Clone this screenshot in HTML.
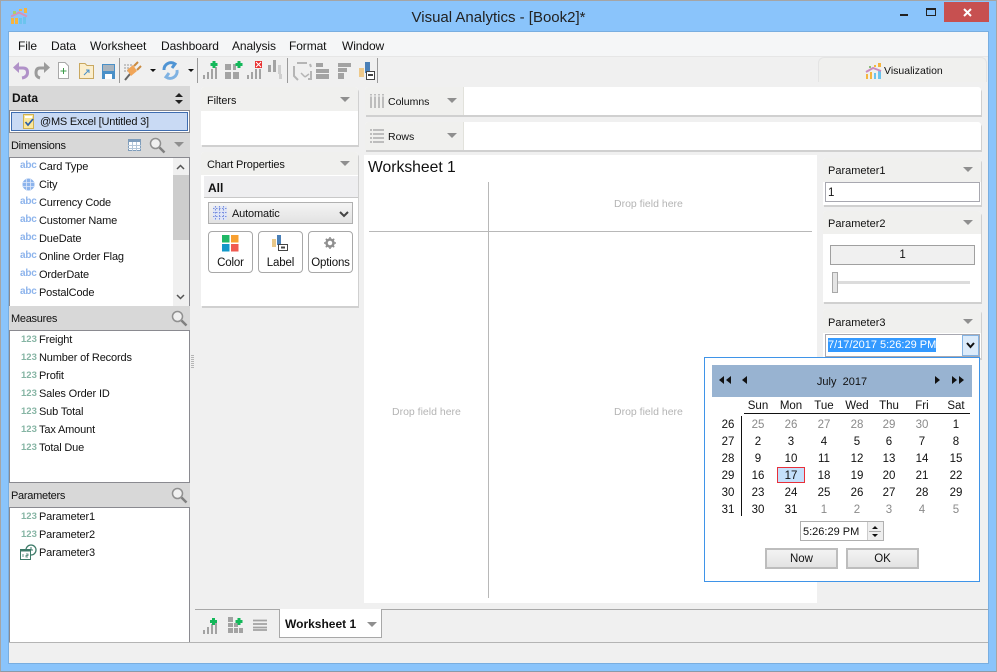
<!DOCTYPE html>
<html><head><meta charset="utf-8"><style>
html,body{margin:0;padding:0}
body{width:997px;height:672px;overflow:hidden;position:relative;background:#8ac4fb;font:11px "Liberation Sans",sans-serif;letter-spacing:-.15px;color:#111}
div,span,svg{position:absolute;box-sizing:border-box}
.t{white-space:nowrap;line-height:14px;margin-top:1px}
.hd{background:#d8d8d8}
.pn{background:#fff;box-shadow:1px 2px 0 #d0d0d0;border-radius:3px 3px 0 0}
.ph{left:0;top:0;right:0;background:#f0f0ee;border-radius:3px 3px 0 0}
.arr{width:0;height:0;border-left:5px solid transparent;border-right:5px solid transparent;border-top:5px solid #8f8f8f}
.g{color:#8a8a8a}
.c{text-align:center;width:30px;margin-left:-15px;line-height:14px;font-size:11.5px;letter-spacing:0}
.ic{color:#8db4ec;font-size:10px;font-weight:bold;letter-spacing:-.2px;margin-top:2px}
.n{color:#86b5a4;font-size:9.5px;font-weight:bold;letter-spacing:0}
.m{font-size:12px;letter-spacing:-.1px;top:38px}
.h2{letter-spacing:-.28px}
.z{letter-spacing:0}
.btn{background:linear-gradient(#f3f3f3,#e3e3e3);border:2px solid #bdbdbd;text-align:center;line-height:18px;font-size:11.5px;letter-spacing:0}
.cb{background:#fff;border:1px solid #a8a8a8;border-radius:4px;text-align:center}
</style></head><body>
<div style="left:0;top:0;width:997px;height:672px;border:1px solid #a5a5a5;border-bottom-color:#8a9aa8"></div>
<svg style="left:11px;top:8px" width="17" height="17" viewBox="0 0 17 17"><rect x="0" y="10" width="3" height="6" fill="#f5b53f"/><rect x="4" y="10" width="3" height="6" fill="#f5b53f"/><rect x="8" y="10" width="3" height="6" fill="#6cc4ee"/><rect x="12" y="9" width="3" height="7" fill="#6cc4ee"/><path d="M0 8.500L8 4.500L16 8.500" stroke="#d893b8" stroke-width="2" fill="none"/><rect x="2" y="3" width="3" height="3" fill="#a8cf70"/><rect x="8" y="1" width="3" height="2" fill="#f5b53f"/><rect x="13" y="0" width="3" height="5" fill="#f5b53f"/></svg>
<div class="t" style="left:0;width:997px;top:8px;text-align:center;font-size:15px;line-height:17px;color:#222;letter-spacing:0">Visual Analytics - [Book2]*</div>
<div style="left:900px;top:14px;width:8px;height:2px;background:#222"></div>
<div style="left:926px;top:8px;width:10px;height:8px;border:1px solid #222;border-top-width:2px"></div>
<div style="left:944px;top:2px;width:45px;height:20px;background:#c75050"></div>
<svg style="left:963px;top:8px" width="9" height="9"><path d="M1 1L8 8M8 1L1 8" stroke="#fff" stroke-width="2"/></svg>

<div style="left:8px;top:31px;width:981px;height:633px;background:#f0f0f0;border:1px solid #79aee0"></div>
<div style="left:9px;top:32px;width:979px;height:24px;background:#f5f6f7"></div>
<div style="left:9px;top:56px;width:979px;height:29px;background:#f0f0f0;border-top:1px solid #e6e6e6"></div>
<div class="t m" style="left:18px">File</div>
<div class="t m" style="left:51px">Data</div>
<div class="t m" style="left:90px">Worksheet</div>
<div class="t m" style="left:161px">Dashboard</div>
<div class="t m" style="left:232px">Analysis</div>
<div class="t m" style="left:289px">Format</div>
<div class="t m" style="left:342px">Window</div>

<!-- toolbar -->
<svg style="left:9px;top:56px" width="280" height="28" viewBox="0 0 280 28">
<path d="M7 12H14Q18.500 12 18.500 16.500Q18.500 21 13 22" stroke="#b091c8" stroke-width="3" fill="none"/><path d="M10 6V17L4 11.500Z" fill="#b091c8"/>
<path d="M38 12H31Q27 12 27 17Q27 21 31 22" stroke="#9b9b9b" stroke-width="3" fill="none"/><path d="M35 6V17L41 11.500Z" fill="#9b9b9b"/>
<path d="M49.500 6.500H56L59.500 10V22.500H49.500Z" fill="#fff" stroke="#a8a8a8"/><path d="M54.500 12V18M51.500 15H57.500" stroke="#3b9b48"/>
<path d="M70.500 10.500V7.500H76L78 9.500H84.500V22.500H70.500Z" fill="#fbeecd" stroke="#c9a860"/><path d="M75 19L80 14M77 14H80V17" stroke="#4a90c8" fill="none"/>
<rect x="93" y="8" width="13" height="15" fill="#4a90c8"/><rect x="94" y="9" width="11" height="6" fill="#a9b4be"/><rect x="96" y="18" width="7" height="5" fill="#fff"/>
<rect x="110" y="2" width="1" height="25" fill="#9a9a9a"/>
<path d="M115 9h9M115 12h7M115 15h5" stroke="#999" stroke-dasharray="2 1"/><path d="M116 24L121 18" stroke="#666" stroke-width="2"/><path d="M118 14L124 9L128 15L122 20Z" fill="#f0a558"/><path d="M125 10L129 6M128 14L132 10" stroke="#c98a40" stroke-width="2"/>
<path d="M141 13h6l-3 3z" fill="#111"/>
<path d="M155 14A7 7 0 0 1 166 8L163 12" stroke="#4f94d4" stroke-width="3" fill="none"/><path d="M168 14A7 7 0 0 1 157 21L160 17" stroke="#7fb2e2" stroke-width="3" fill="none"/>
<path d="M179 13h6l-3 3z" fill="#111"/>
<rect x="188" y="2" width="1" height="25" fill="#9a9a9a"/>
<g fill="#a3a3a3"><rect x="194" y="19" width="2" height="4"/><rect x="198" y="16" width="2" height="7"/><rect x="202" y="13" width="2" height="10"/><rect x="206" y="11" width="2" height="12"/></g>
<path d="M205 5v7M201.500 8.500h7" stroke="#13b85a" stroke-width="3"/>
<g fill="#a3a3a3"><rect x="216" y="8" width="6" height="6"/><rect x="216" y="16" width="6" height="7"/><rect x="224" y="16" width="6" height="7"/><rect x="224" y="8" width="3" height="6"/></g>
<path d="M230 5v7M226.500 8.500h7" stroke="#13b85a" stroke-width="3"/>
<g fill="#a3a3a3"><rect x="238" y="19" width="2" height="4"/><rect x="242" y="16" width="2" height="7"/><rect x="246" y="13" width="2" height="10"/><rect x="250" y="13" width="2" height="10"/></g>
<rect x="246" y="5" width="7" height="7" fill="#e83030"/><path d="M247 6l5 5M252 6l-5 5" stroke="#fff" stroke-width="1"/>
<g fill="#a3a3a3"><rect x="259" y="9" width="3" height="7"/><rect x="264" y="4" width="3" height="12"/></g><g fill="#cfcfcf"><rect x="269" y="9" width="3" height="9"/><rect x="270" y="18" width="3" height="5"/></g>
</svg>
<div style="left:287px;top:58px;width:1px;height:25px;background:#9a9a9a"></div>
<svg style="left:290px;top:56px" width="90" height="28" viewBox="0 0 90 28">
<path d="M4 10V20L8 24M7 7H17M20 8L21 11M21 15V23H18" stroke="#b5b5b5" stroke-width="2" fill="none"/><path d="M15 21L11 17M15 21L19 18" stroke="#b5b5b5" stroke-width="1.500" fill="none"/>
<g fill="#a3a3a3"><rect x="26" y="7" width="7" height="4"/><rect x="26" y="13" width="13" height="4"/><rect x="26" y="18" width="13" height="5"/></g>
<g fill="#a3a3a3"><rect x="48" y="7" width="13" height="4"/><rect x="48" y="12" width="9" height="4"/><rect x="48" y="17" width="6" height="6"/></g>
<rect x="69" y="12" width="5" height="9" fill="#eec98a"/><rect x="75" y="6" width="5" height="11" fill="#4a80b8"/><rect x="76.500" y="15.500" width="8" height="8" fill="#fff" stroke="#444"/><rect x="78" y="18" width="5" height="2" fill="#444"/>
</svg>
<div style="left:377px;top:58px;width:1px;height:25px;background:#9a9a9a"></div>

<div style="left:818px;top:57px;width:169px;height:25px;background:#f0f0ee;border:1px solid #e4e4e4;border-bottom:0;border-radius:6px 6px 0 0"></div>
<svg style="left:865px;top:63px" width="18" height="16" viewBox="0 0 18 16"><rect x="1" y="11" width="2" height="5" fill="#f5b53f"/><rect x="5" y="9" width="2" height="7" fill="#f5b53f"/><rect x="9" y="10" width="2" height="6" fill="#6cc4ee"/><rect x="13" y="8" width="3" height="8" fill="#6cc4ee"/><path d="M1 9L8 5L16 8" stroke="#c98cc0" stroke-width="2" fill="none"/><rect x="4" y="3" width="2" height="2" fill="#8cc07a"/><rect x="9" y="2" width="2" height="2" fill="#f5b53f"/><rect x="13" y="0" width="3" height="4" fill="#f5b53f"/></svg>
<div class="t z" style="left:884px;top:63px;font-size:10.5px">Visualization</div>

<!-- left column -->
<div class="hd" style="left:9px;top:86px;width:181px;height:24px"></div>
<div class="t z" style="left:12px;top:90px;font-weight:bold;font-size:12px">Data</div>
<svg style="left:175px;top:93px" width="8" height="11"><path d="M0 4L4 0L8 4ZM0 7H8L4 11Z" fill="#222"/></svg>
<div style="left:9px;top:110px;width:181px;height:23px;background:#fff;border:1px solid #8a8a90"></div>
<div style="left:11px;top:112px;width:177px;height:19px;background:#c9daf4;border:1px solid #3f6db0"></div>
<svg style="left:23px;top:114px" width="12" height="15" viewBox="0 0 12 15"><rect x=".5" y=".5" width="10" height="14" fill="#fbe79b" stroke="#d0b050"/><rect x="2" y="2" width="7" height="2" fill="#fff"/><path d="M2.500 8L5 11L10 5" stroke="#2a5ea8" stroke-width="1.700" fill="none"/></svg>
<div class="t" style="left:40px;top:114px;letter-spacing:-.2px">@MS Excel [Untitled 3]</div>

<div class="hd" style="left:9px;top:133px;width:181px;height:24px"></div>
<div class="t h2" style="left:11px;top:138px">Dimensions</div>
<svg style="left:128px;top:139px" width="13" height="12"><rect x=".5" y=".5" width="12" height="11" fill="#fff" stroke="#7f9dbb"/><rect x=".5" y=".5" width="12" height="2.500" fill="#7f9dbb"/><path d="M0 6.500H13M0 9.500H13M4.500 3V12M8.500 3V12" stroke="#b5c7d8"/></svg>
<svg style="left:149px;top:137px" width="17" height="17"><circle cx="6.500" cy="6.500" r="5" fill="#f0f0f0" stroke="#909090" stroke-width="1.500"/><path d="M10.500 10.500L15.500 15.500" stroke="#808080" stroke-width="2.500"/></svg>
<div class="arr" style="left:174px;top:142px"></div>
<div style="left:9px;top:157px;width:181px;height:150px;background:#fff;border:1px solid #8a8a90"></div>
<div style="left:173px;top:158px;width:16px;height:148px;background:#f0f0f0"></div>
<div style="left:173px;top:175px;width:16px;height:65px;background:#cdcdcd"></div>
<svg style="left:176px;top:164px" width="9" height="6"><path d="M1 5L4.500 1.500L8 5" stroke="#555" stroke-width="1.500" fill="none"/></svg>
<svg style="left:176px;top:294px" width="9" height="6"><path d="M1 1L4.500 4.500L8 1" stroke="#555" stroke-width="1.500" fill="none"/></svg>

<div class="t ic" style="left:20px;top:157px">abc</div><div class="t" style="left:39px;top:159px">Card Type</div>
<svg style="left:22px;top:178px" width="13" height="13"><circle cx="6.500" cy="6.500" r="6" fill="#8db4ec"/><path d="M0 4.500H13M0 8.500H13M4.500 0V13M8.500 0V13" stroke="#dfe9fa" stroke-width=".8"/></svg><div class="t" style="left:39px;top:177px">City</div>
<div class="t ic" style="left:20px;top:193px">abc</div><div class="t" style="left:39px;top:195px">Currency Code</div>
<div class="t ic" style="left:20px;top:211px">abc</div><div class="t" style="left:39px;top:213px">Customer Name</div>
<div class="t ic" style="left:20px;top:229px">abc</div><div class="t" style="left:39px;top:231px">DueDate</div>
<div class="t ic" style="left:20px;top:247px">abc</div><div class="t" style="left:39px;top:249px">Online Order Flag</div>
<div class="t ic" style="left:20px;top:265px">abc</div><div class="t" style="left:39px;top:267px">OrderDate</div>
<div class="t ic" style="left:20px;top:283px">abc</div><div class="t" style="left:39px;top:285px">PostalCode</div>

<div class="hd" style="left:9px;top:306px;width:181px;height:24px"></div>
<div class="t h2" style="left:11px;top:311px">Measures</div>
<svg style="left:171px;top:310px" width="17" height="17"><circle cx="6.500" cy="6.500" r="5" fill="#f0f0f0" stroke="#909090" stroke-width="1.500"/><path d="M10.500 10.500L15.500 15.500" stroke="#808080" stroke-width="2.500"/></svg>
<div style="left:9px;top:330px;width:181px;height:153px;background:#fff;border:1px solid #8a8a90"></div>
<div class="t n" style="left:21px;top:332px">123</div><div class="t" style="left:39px;top:332px">Freight</div>
<div class="t n" style="left:21px;top:350px">123</div><div class="t" style="left:39px;top:350px">Number of Records</div>
<div class="t n" style="left:21px;top:368px">123</div><div class="t" style="left:39px;top:368px">Profit</div>
<div class="t n" style="left:21px;top:386px">123</div><div class="t" style="left:39px;top:386px">Sales Order ID</div>
<div class="t n" style="left:21px;top:404px">123</div><div class="t" style="left:39px;top:404px">Sub Total</div>
<div class="t n" style="left:21px;top:422px">123</div><div class="t" style="left:39px;top:422px">Tax Amount</div>
<div class="t n" style="left:21px;top:440px">123</div><div class="t" style="left:39px;top:440px">Total Due</div>

<div class="hd" style="left:9px;top:483px;width:181px;height:24px"></div>
<div class="t h2" style="left:11px;top:488px">Parameters</div>
<svg style="left:171px;top:487px" width="17" height="17"><circle cx="6.500" cy="6.500" r="5" fill="#f0f0f0" stroke="#909090" stroke-width="1.500"/><path d="M10.500 10.500L15.500 15.500" stroke="#808080" stroke-width="2.500"/></svg>
<div style="left:9px;top:507px;width:181px;height:135px;background:#fff;border:1px solid #8a8a90;border-bottom:0"></div>
<div class="t n" style="left:21px;top:509px">123</div><div class="t" style="left:39px;top:509px">Parameter1</div>
<div class="t n" style="left:21px;top:527px">123</div><div class="t" style="left:39px;top:527px">Parameter2</div>
<svg style="left:20px;top:544px" width="17" height="16"><circle cx="11" cy="6" r="5" fill="#fff" stroke="#3d7a68" stroke-width="1.300"/><path d="M11 3V6H13" stroke="#3d7a68" fill="none"/><rect x=".5" y="5.500" width="10" height="10" fill="#fff" stroke="#3d7a68"/><rect x="1" y="5" width="9" height="2.500" fill="#3d7a68"/><path d="M3 10v3M6 10h2v1.500H6V13h2" stroke="#3d7a68" fill="none" stroke-width=".8"/></svg>
<div class="t" style="left:39px;top:545px">Parameter3</div>
<svg style="left:191px;top:355px" width="3" height="15"><path d="M0 .5H3M0 2.500H3M0 4.500H3M0 6.500H3M0 8.500H3M0 10.500H3M0 12.500H3" stroke="#b5b5b5"/></svg>

<!-- filters -->
<div class="pn" style="left:201px;top:87px;width:157px;height:58px"><div class="ph" style="height:24px"></div></div>
<div class="t z" style="left:207px;top:93px;font-size:10.8px">Filters</div>
<div class="arr" style="left:340px;top:97px"></div>
<div class="pn" style="left:201px;top:152px;width:157px;height:154px"><div class="ph" style="height:23px"></div></div>
<div class="t" style="left:207px;top:157px">Chart Properties</div>
<div class="arr" style="left:340px;top:161px"></div>
<div style="left:204px;top:176px;width:154px;height:22px;background:#eeeef0;border-bottom:1px solid #c8c8c8"></div>
<div class="t z" style="left:208px;top:180px;font-weight:bold;font-size:12px">All</div>
<div style="left:208px;top:202px;width:145px;height:22px;background:linear-gradient(#f4f4f4,#e2e2e2);border:1px solid #b0b0b0"></div>
<svg style="left:213px;top:206px" width="14" height="14"><rect width="14" height="14" fill="#dfe5f5"/><path d="M0 2.500H14M0 6.500H14M0 10.500H14M2.500 0V14M6.500 0V14M10.500 0V14" stroke="#7a90e0" stroke-dasharray="1.500 1.500"/></svg>
<div class="t" style="left:232px;top:206px">Automatic</div>
<svg style="left:339px;top:211px" width="10" height="7"><path d="M1 1L5 5L9 1" stroke="#444" stroke-width="2" fill="none"/></svg>
<div class="cb" style="left:208px;top:231px;width:45px;height:42px"></div>
<svg style="left:222px;top:235px" width="17" height="17"><rect width="7.500" height="7.500" fill="#1fb866"/><rect x="9" width="7.500" height="7.500" fill="#f8a030"/><rect y="9" width="7.500" height="7.500" fill="#1298c8"/><rect x="9" y="9" width="7.500" height="7.500" fill="#f05a50"/></svg>
<div class="t" style="left:208px;width:45px;text-align:center;top:255px;font-size:11.5px">Color</div>
<div class="cb" style="left:258px;top:231px;width:45px;height:42px"></div>
<svg style="left:272px;top:235px" width="16" height="16"><rect y="4" width="4" height="8" fill="#e8c88a"/><rect x="5" y="0" width="4" height="10" fill="#4a80b8"/><rect x="6.500" y="9.500" width="9" height="6" fill="#fff" stroke="#444"/><rect x="9" y="11.500" width="4" height="2" fill="#444"/></svg>
<div class="t" style="left:258px;width:45px;text-align:center;top:255px;font-size:11.5px">Label</div>
<div class="cb" style="left:308px;top:231px;width:45px;height:42px"></div>
<svg style="left:324px;top:237px" width="12" height="12"><circle cx="6" cy="6" r="3.500" fill="none" stroke="#8f8f8f" stroke-width="2.500"/><path d="M6 0V12M0 6H12M1.800 1.800L10.200 10.200M10.200 1.800L1.800 10.200" stroke="#8f8f8f" stroke-width="1.500" stroke-dasharray="2 8"/></svg>
<div class="t" style="left:308px;width:45px;text-align:center;top:255px;font-size:11.5px">Options</div>

<!-- shelves -->
<div class="pn" style="left:365px;top:87px;width:616px;height:28px"></div>
<div style="left:365px;top:87px;width:99px;height:28px;background:#f0f0ee;border-right:1px solid #e2e2dc;border-radius:3px 0 0 0"></div>
<svg style="left:370px;top:94px" width="14" height="14"><path d="M1 0V14M5 0V14M9 0V14M13 0V14" stroke="#bdbdbd" stroke-width="2" stroke-dasharray="1.500 1 11.500 0"/></svg>
<div class="t z" style="left:388px;top:94px;font-size:10.5px">Columns</div>
<div class="arr" style="left:447px;top:98px"></div>
<div class="pn" style="left:365px;top:122px;width:616px;height:28px"></div>
<div style="left:365px;top:122px;width:99px;height:28px;background:#f0f0ee;border-right:1px solid #e2e2dc;border-radius:3px 0 0 0"></div>
<svg style="left:370px;top:129px" width="14" height="14"><path d="M0 1H14M0 5H14M0 9H14M0 13H14" stroke="#bdbdbd" stroke-width="2" stroke-dasharray="2 1 11 0"/></svg>
<div class="t z" style="left:388px;top:129px;font-size:10.5px">Rows</div>
<div class="arr" style="left:447px;top:133px"></div>

<!-- canvas -->
<div style="left:364px;top:155px;width:453px;height:448px;background:#fff"></div>
<div class="t z" style="left:368px;top:157px;font-size:15.7px;line-height:19px">Worksheet 1</div>
<div style="left:369px;top:231px;width:443px;height:1px;background:#b8b8b8"></div>
<div style="left:488px;top:182px;width:1px;height:416px;background:#b8b8b8"></div>
<div class="t z" style="left:614px;top:196px;color:#b4b4b4;font-size:10.5px">Drop field here</div>
<div class="t z" style="left:392px;top:404px;color:#b4b4b4;font-size:10.5px">Drop field here</div>
<div class="t z" style="left:614px;top:404px;color:#b4b4b4;font-size:10.5px">Drop field here</div>

<!-- right params -->
<div class="pn" style="left:823px;top:158px;width:158px;height:47px"><div class="ph" style="height:24px"></div></div>
<div class="t z" style="left:828px;top:163px">Parameter1</div>
<div class="arr" style="left:963px;top:167px"></div>
<div style="left:825px;top:182px;width:155px;height:20px;background:#fff;border:1px solid #a8a8b0"></div>
<div class="t z" style="left:828px;top:185px;font-size:11.5px">1</div>
<div class="pn" style="left:823px;top:211px;width:158px;height:91px"><div class="ph" style="height:23px"></div></div>
<div class="t z" style="left:828px;top:216px">Parameter2</div>
<div class="arr" style="left:963px;top:220px"></div>
<div style="left:830px;top:245px;width:145px;height:20px;background:#f0f0f0;border:1px solid #a0a0a0;text-align:center;line-height:18px;font-size:11.5px">1</div>
<div style="left:837px;top:281px;width:133px;height:3px;background:#dcdcdc"></div>
<div style="left:832px;top:272px;width:6px;height:21px;background:#e4e4e4;border:1px solid #a8a8a8"></div>
<div class="pn" style="left:823px;top:309px;width:158px;height:49px"><div class="ph" style="height:24px"></div></div>
<div class="t z" style="left:828px;top:315px">Parameter3</div>
<div class="arr" style="left:963px;top:319px"></div>
<div style="left:825px;top:334px;width:155px;height:23px;background:#fff;border:1px solid #a8a8b0"></div>
<div style="left:828px;top:338px;width:108px;height:14px;background:#3399ff"></div>
<div class="t z" style="left:828px;top:337px;color:#fff">7/17/2017 5:26:29 PM</div>
<div style="left:962px;top:335px;width:17px;height:21px;background:#dcebfa;border:1px solid #84b4e4"></div>
<svg style="left:966px;top:342px" width="9" height="7"><path d="M1 1L4.500 5L8 1" stroke="#111" stroke-width="2" fill="none"/></svg>

<!-- calendar -->
<div style="left:704px;top:357px;width:276px;height:225px;background:#fff;border:1px solid #3f94e8"></div>
<div style="left:712px;top:365px;width:260px;height:32px;background:#98b3d1"></div>
<svg style="left:719px;top:376px" width="14" height="9"><path d="M5 0V8L0 4ZM12 0V8L7 4Z" fill="#111"/></svg>
<svg style="left:742px;top:376px" width="6" height="9"><path d="M5 0V8L0 4Z" fill="#111"/></svg>
<div class="t z" style="left:712px;width:260px;text-align:center;top:374px">July&nbsp; 2017</div>
<svg style="left:935px;top:376px" width="6" height="9"><path d="M0 0V8L5 4Z" fill="#111"/></svg>
<svg style="left:952px;top:376px" width="14" height="9"><path d="M0 0V8L5 4ZM7 0V8L12 4Z" fill="#111"/></svg>
<div style="left:744px;top:413px;width:226px;height:1px;background:#111"></div>
<div style="left:741px;top:416px;width:1px;height:100px;background:#111"></div>
<div id="c"><div class="t c" style="left:758px;top:398px">Sun</div><div class="t c" style="left:791px;top:398px">Mon</div><div class="t c" style="left:824px;top:398px">Tue</div><div class="t c" style="left:857px;top:398px">Wed</div><div class="t c" style="left:889px;top:398px">Thu</div><div class="t c" style="left:922px;top:398px">Fri</div><div class="t c" style="left:956px;top:398px">Sat</div>
<div class="t c" style="left:728px;top:417px">26</div><div class="t c g" style="left:758px;top:417px">25</div><div class="t c g" style="left:791px;top:417px">26</div><div class="t c g" style="left:824px;top:417px">27</div><div class="t c g" style="left:857px;top:417px">28</div><div class="t c g" style="left:889px;top:417px">29</div><div class="t c g" style="left:922px;top:417px">30</div><div class="t c" style="left:956px;top:417px">1</div>
<div class="t c" style="left:728px;top:434px">27</div><div class="t c" style="left:758px;top:434px">2</div><div class="t c" style="left:791px;top:434px">3</div><div class="t c" style="left:824px;top:434px">4</div><div class="t c" style="left:857px;top:434px">5</div><div class="t c" style="left:889px;top:434px">6</div><div class="t c" style="left:922px;top:434px">7</div><div class="t c" style="left:956px;top:434px">8</div>
<div class="t c" style="left:728px;top:451px">28</div><div class="t c" style="left:758px;top:451px">9</div><div class="t c" style="left:791px;top:451px">10</div><div class="t c" style="left:824px;top:451px">11</div><div class="t c" style="left:857px;top:451px">12</div><div class="t c" style="left:889px;top:451px">13</div><div class="t c" style="left:922px;top:451px">14</div><div class="t c" style="left:956px;top:451px">15</div>
<div style="left:777px;top:467px;width:28px;height:16px;background:#c4e0fb;border:1px solid #e8303a"></div>
<div class="t c" style="left:728px;top:468px">29</div><div class="t c" style="left:758px;top:468px">16</div><div class="t c" style="left:791px;top:468px">17</div><div class="t c" style="left:824px;top:468px">18</div><div class="t c" style="left:857px;top:468px">19</div><div class="t c" style="left:889px;top:468px">20</div><div class="t c" style="left:922px;top:468px">21</div><div class="t c" style="left:956px;top:468px">22</div>
<div class="t c" style="left:728px;top:485px">30</div><div class="t c" style="left:758px;top:485px">23</div><div class="t c" style="left:791px;top:485px">24</div><div class="t c" style="left:824px;top:485px">25</div><div class="t c" style="left:857px;top:485px">26</div><div class="t c" style="left:889px;top:485px">27</div><div class="t c" style="left:922px;top:485px">28</div><div class="t c" style="left:956px;top:485px">29</div>
<div class="t c" style="left:728px;top:502px">31</div><div class="t c" style="left:758px;top:502px">30</div><div class="t c" style="left:791px;top:502px">31</div><div class="t c g" style="left:824px;top:502px">1</div><div class="t c g" style="left:857px;top:502px">2</div><div class="t c g" style="left:889px;top:502px">3</div><div class="t c g" style="left:922px;top:502px">4</div><div class="t c g" style="left:956px;top:502px">5</div></div>
<div style="left:800px;top:521px;width:84px;height:20px;background:#fff;border:1px solid #b0b0b0"></div>
<div class="t z" style="left:803px;top:524px">5:26:29 PM</div>
<div style="left:867px;top:522px;width:16px;height:18px;background:#eee;border-left:1px solid #ccc"></div>
<svg style="left:869px;top:524px" width="12" height="15"><path d="M3 5L6 2L9 5ZM3 10H9L6 13Z" fill="#111"/><path d="M0 7.500H12" stroke="#aaa"/></svg>
<div class="btn" style="left:765px;top:548px;width:73px;height:21px">Now</div>
<div class="btn" style="left:846px;top:548px;width:73px;height:21px">OK</div>

<!-- bottom tabs -->
<div style="left:195px;top:609px;width:793px;height:1px;background:#a8a8a8"></div>
<div style="left:9px;top:642px;width:979px;height:1px;background:#b4b4b4"></div>
<div style="left:279px;top:609px;width:103px;height:29px;background:#fff;border:1px solid #a8a8a8;border-top:0"></div>
<div class="t z" style="left:285px;top:616px;font-weight:bold;font-size:12px">Worksheet 1</div>
<div class="arr" style="left:367px;top:622px"></div>
<svg style="left:203px;top:617px" width="18" height="17"><g fill="#a3a3a3"><rect y="13" width="2" height="4"/><rect x="4" y="10" width="2" height="7"/><rect x="8" y="7" width="2" height="10"/><rect x="12" y="6" width="2" height="11"/></g><path d="M10.500 1v7M7 4.500h7" stroke="#13b85a" stroke-width="3"/></svg>
<svg style="left:228px;top:617px" width="16" height="16"><g fill="#a3a3a3"><rect width="5" height="5"/><rect y="6" width="5" height="4"/><rect y="11" width="5" height="5"/><rect x="6" y="6" width="4" height="4"/><rect x="6" y="11" width="4" height="5"/><rect x="11" y="11" width="4" height="5"/></g><path d="M11 1v7M7.500 4.500h7" stroke="#13b85a" stroke-width="3"/></svg>
<svg style="left:253px;top:619px" width="14" height="12"><path d="M0 1.500H14M0 5H14M0 8.500H14M0 11H14" stroke="#a3a3a3" stroke-width="1.800"/></svg>
</body></html>
